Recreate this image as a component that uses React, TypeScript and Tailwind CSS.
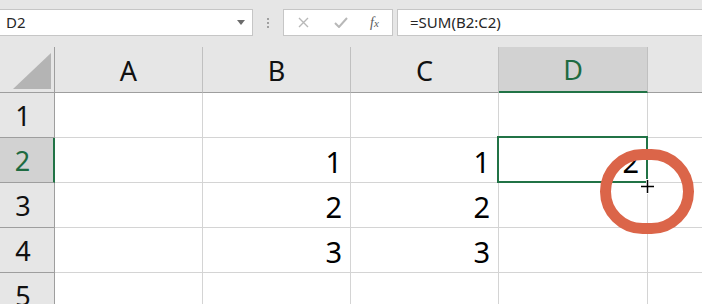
import React from "react";

const font = { fontFamily: '"Noto Sans", "Open Sans", Arial, sans-serif' };

const cols = ["A", "B", "C", "D"];
const rows: (string | number)[][] = [
  ["", "", "", ""],
  ["", 1, 1, 2],
  ["", 2, 2, ""],
  ["", 3, 3, ""],
  ["", "", "", ""],
];

const colW = ["w-[148px]", "w-[148px]", "w-[148px]", "w-[149px]"];

function FormulaBar() {
  return (
    <div className="h-[47px] bg-[#e6e6e6] flex items-start pt-[9px]">
      {/* name box */}
      <div className="ml-[-1px] w-[254px] h-[27px] bg-white border border-[#c6c6c6] flex items-center justify-between pl-[6px] pr-[7px]">
        <span className="text-[15px] text-[#262626] leading-none">D2</span>
        <svg width="8" height="5" viewBox="0 0 8 5">
          <path d="M0 0h8L4 5z" fill="#6b6b6b" />
        </svg>
      </div>
      {/* grip dots */}
      <div className="w-[30px] h-[27px] flex flex-col items-center justify-center gap-[2px]">
        <span className="w-[2px] h-[2px] bg-[#a0a0a0]" />
        <span className="w-[2px] h-[2px] bg-[#a0a0a0]" />
        <span className="w-[2px] h-[2px] bg-[#a0a0a0]" />
      </div>
      {/* cancel / enter / fx */}
      <div className="w-[110px] h-[27px] bg-white border border-[#c6c6c6] flex items-center pl-[14px]">
        <svg width="11" height="11" viewBox="0 0 11 11">
          <path d="M1 1l9 9M10 1l-9 9" stroke="#b8b8b8" strokeWidth="1.4" />
        </svg>
        <svg className="ml-[25px]" width="14" height="11" viewBox="0 0 14 11">
          <path d="M1 6l4 4 8-9" stroke="#b8b8b8" strokeWidth="2" fill="none" />
        </svg>
        <span
          className="ml-[22px] text-[14px] italic text-[#5c5c5c] leading-none"
          style={{ fontFamily: '"Liberation Serif", serif' }}
        >
          f<span className="text-[11px]">x</span>
        </span>
      </div>
      {/* formula input */}
      <div className="ml-[4px] flex-1 h-[27px] bg-white border border-[#c6c6c6] border-r-0 flex items-center pl-[12px]">
        <span className="text-[15px] text-[#262626] leading-none">=SUM(B2:C2)</span>
      </div>
    </div>
  );
}

function HeaderRow() {
  return (
    <div className="flex h-[46px] bg-[#e6e6e6]">
      <div className="w-[55px] shrink-0 border-r border-b border-[#9e9e9e] flex items-end justify-end pr-[3px] pb-[3px]">
        <svg width="38" height="36" viewBox="0 0 38 36">
          <path d="M38 0V36H0z" fill="#b4b4b4" />
        </svg>
      </div>
      {cols.map((c, i) => {
        const sel = c === "D";
        return (
          <div
            key={c}
            className={`${colW[i]} shrink-0 flex items-center justify-center text-[27px] leading-none pt-[1px] border-r border-[#c0c0c0] ${
              sel ? "bg-[#d2d2d2] text-[#1e6b41] border-b-2 border-b-[#217346]" : "text-[#111] border-b border-b-[#9e9e9e]"
            }`}
          >
            {c}
          </div>
        );
      })}
      <div className="flex-1 border-b border-[#9e9e9e]" />
    </div>
  );
}

function BodyRow({ n, vals }: { n: number; vals: (string | number)[] }) {
  const sel = n === 2;
  return (
    <div className="flex h-[45px]">
      <div
        className={`w-[55px] shrink-0 flex items-center justify-center pr-[8px] text-[27px] leading-none border-b ${
          sel
            ? "bg-[#d2d2d2] text-[#1e6b41] border-r-2 border-r-[#217346] border-b-[#9e9e9e] w-[55px]"
            : "bg-[#e6e6e6] text-[#111] border-r border-r-[#9e9e9e] border-b-[#9e9e9e]"
        }`}
      >
        {n}
      </div>
      {vals.map((v, i) => (
        <div
          key={i}
          className={`${colW[i]} shrink-0 bg-white border-r border-b border-[#d4d4d4] flex items-center justify-end pr-[8px] pt-[2px] text-[29px] leading-none text-black`}
        >
          {v}
        </div>
      ))}
      <div className="flex-1 bg-white border-b border-[#d4d4d4]" />
    </div>
  );
}

export default function App() {
  return (
    <div className="w-[702px] h-[304px] overflow-hidden bg-white relative" style={font}>
      <FormulaBar />
      <HeaderRow />
      {rows.map((r, i) => (
        <BodyRow key={i} n={i + 1} vals={r} />
      ))}

      {/* active cell border */}
      <div className="absolute left-[497px] top-[136px] w-[151px] h-[47px] border-2 border-[#217346]" />

      {/* highlight ring */}
      <div className="absolute left-[600px] top-[149px] w-[94px] h-[85px] rounded-full border-[11px] border-[#db6549]" />

      {/* crosshair cursor */}
      <svg className="absolute left-[640px] top-[179px]" width="15" height="15" viewBox="0 0 15 15">
        <path d="M6 0h3v6h6v3H9v6H6V9H0V6h6z" fill="#fff" />
        <path d="M6.75 1h1.5v5.75H14v1.5H8.25V14h-1.5V8.25H1v-1.5h5.75z" fill="#000" />
      </svg>
    </div>
  );
}
